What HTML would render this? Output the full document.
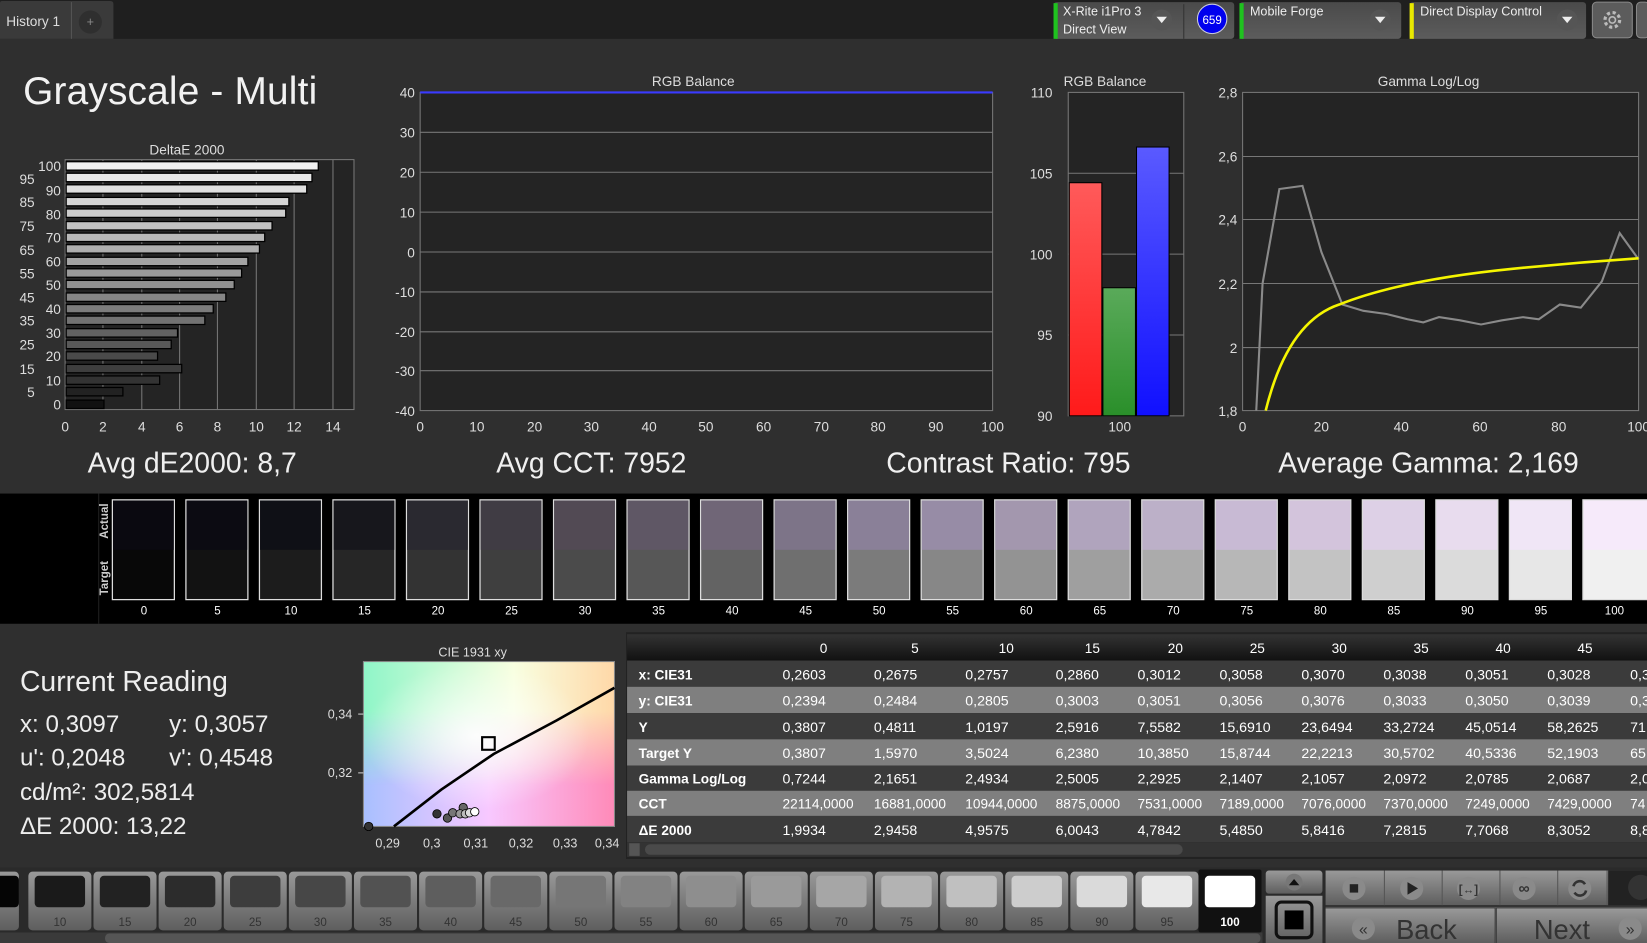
<!DOCTYPE html>
<html><head><meta charset="utf-8"><style>
html,body{margin:0;padding:0;background:#2f2f2f;overflow:hidden}
svg{display:block}
text{font-family:"Liberation Sans","DejaVu Sans",sans-serif}
</style></head><body>
<svg width="1647" height="943" viewBox="0 0 1568 898" preserveAspectRatio="none" xmlns="http://www.w3.org/2000/svg">
<defs>
<linearGradient id="btn" x1="0" y1="0" x2="0" y2="1"><stop offset="0" stop-color="#999"/><stop offset="1" stop-color="#5e5e5e"/></linearGradient>
<linearGradient id="tb" x1="0" y1="0" x2="0" y2="1"><stop offset="0" stop-color="#4a4a4a"/><stop offset="1" stop-color="#5c5c5c"/></linearGradient>
<linearGradient id="rr" x1="0" y1="0" x2="0" y2="1"><stop offset="0" stop-color="#ff5a5a"/><stop offset="1" stop-color="#ff1a1a"/></linearGradient>
<linearGradient id="gg" x1="0" y1="0" x2="0" y2="1"><stop offset="0" stop-color="#5aaa5a"/><stop offset="1" stop-color="#2a8f2a"/></linearGradient>
<linearGradient id="bb" x1="0" y1="0" x2="0" y2="1"><stop offset="0" stop-color="#5a5aff"/><stop offset="1" stop-color="#1010ff"/></linearGradient>
<linearGradient id="hd" x1="0" y1="0" x2="0" y2="1"><stop offset="0" stop-color="#333"/><stop offset="1" stop-color="#111"/></linearGradient>
<linearGradient id="barg" x1="0" y1="0" x2="1" y2="0"><stop offset="0" stop-color="#fff" stop-opacity="0.35"/><stop offset="0.6" stop-color="#fff" stop-opacity="0.1"/><stop offset="1" stop-color="#000" stop-opacity="0.3"/></linearGradient>
<linearGradient id="cieA" x1="0" y1="0" x2="1" y2="0"><stop offset="0" stop-color="#8ff5c8"/><stop offset="0.6" stop-color="#f8ffe0"/><stop offset="1" stop-color="#ffd8a8"/></linearGradient>
<linearGradient id="cieB" x1="0" y1="0" x2="1" y2="0"><stop offset="0" stop-color="#a8c0ff"/><stop offset="0.5" stop-color="#f8c8ff"/><stop offset="1" stop-color="#ff8ab8"/></linearGradient>
<linearGradient id="mg" x1="0" y1="0" x2="0" y2="1"><stop offset="0" stop-color="#fff"/><stop offset="0.3" stop-color="#fff"/><stop offset="0.75" stop-color="#000"/></linearGradient>
<mask id="cm" maskUnits="userSpaceOnUse" x="346" y="630" width="239" height="157"><rect x="346" y="630" width="239" height="157" fill="url(#mg)"/></mask>
<radialGradient id="cieW" cx="0.45" cy="0.45" r="0.45"><stop offset="0" stop-color="#fff" stop-opacity="0.9"/><stop offset="1" stop-color="#fff" stop-opacity="0"/></radialGradient>
</defs>
<rect width="1568" height="898" fill="#2f2f2f"/>
<!-- top bar -->
<rect width="1568" height="37" fill="#1f1f1f"/>
<path d="M0,37 V3 Q0,1 2,1 H105 Q108,1 108,4 V37 Z" fill="#3a3a3a"/>
<line x1="68" y1="2" x2="68" y2="37" stroke="#555"/>
<circle cx="86" cy="21" r="11" fill="#2f2f2f"/><text x="86" y="25" font-size="12" fill="#888" text-anchor="middle">+</text>
<text x="6" y="25" font-size="13" fill="#ddd">History 1</text>
<g>
<rect x="1003" y="2" width="172" height="35" rx="3" fill="url(#tb)"/><rect x="1003" y="3" width="4" height="34" fill="#1fc21f"/>
<text x="1012" y="15" font-size="12" fill="#eee">X-Rite i1Pro 3</text><text x="1012" y="32" font-size="12" fill="#eee">Direct View</text>
<circle cx="1106" cy="19" r="10" fill="#555"/><path d="M1101,16 L1111,16 L1106,22 Z" fill="#eee"/>
<line x1="1127" y1="4" x2="1127" y2="37" stroke="#333"/>
<circle cx="1154" cy="18" r="14" fill="#0000ee" stroke="#ccd" stroke-width="1"/><text x="1154" y="23" font-size="11" fill="#fff" text-anchor="middle">659</text>
<rect x="1180" y="2" width="154" height="35" rx="3" fill="url(#tb)"/><rect x="1180" y="3" width="4" height="34" fill="#1fc21f"/>
<text x="1190" y="15" font-size="12" fill="#eee">Mobile Forge</text>
<circle cx="1314" cy="19" r="10" fill="#555"/><path d="M1309,16 L1319,16 L1314,22 Z" fill="#eee"/>
<rect x="1342" y="2" width="168" height="35" rx="3" fill="url(#tb)"/><rect x="1342" y="3" width="4" height="34" fill="#e8e800"/>
<text x="1352" y="15" font-size="12" fill="#eee">Direct Display Control</text>
<circle cx="1492" cy="19" r="10" fill="#555"/><path d="M1487,16 L1497,16 L1492,22 Z" fill="#eee"/>
<rect x="1516" y="2" width="38" height="34" rx="4" fill="#5c5c5c" stroke="#888"/>
<circle cx="1535" cy="19" r="7" fill="none" stroke="#bbb" stroke-width="3" stroke-dasharray="3 2.5"/><circle cx="1535" cy="19" r="3" fill="#5c5c5c" stroke="#bbb" stroke-width="1.5"/>
<rect x="1558" y="2" width="12" height="34" rx="4" fill="#5c5c5c" stroke="#888"/>
</g>
<!-- title -->
<text x="22" y="99" font-size="37" fill="#f2f2f2" textLength="280">Grayscale - Multi</text>
<!-- DeltaE chart -->
<text x="178" y="147" font-size="13" fill="#ddd" text-anchor="middle">DeltaE 2000</text>
<rect x="62" y="152" width="275" height="238" fill="#242424" stroke="#777"/>
<g stroke="#777">
<line x1="98" y1="152" x2="98" y2="390"/><line x1="135" y1="152" x2="135" y2="390"/><line x1="171" y1="152" x2="171" y2="390"/><line x1="207" y1="152" x2="207" y2="390"/><line x1="244" y1="152" x2="244" y2="390"/><line x1="280" y1="152" x2="280" y2="390"/><line x1="317" y1="152" x2="317" y2="390"/>
</g>
<g stroke="#000" stroke-width="1.2">
<rect x="63" y="154" width="240" height="8" fill="#f0f0f0"/>
<rect x="63" y="165" width="234" height="8" fill="#e8e8e8"/>
<rect x="63" y="176" width="229" height="8" fill="#e0e0e0"/>
<rect x="63" y="188" width="212" height="8" fill="#d6d6d6"/>
<rect x="63" y="199" width="209" height="8" fill="#cccccc"/>
<rect x="63" y="211" width="196" height="8" fill="#c2c2c2"/>
<rect x="63" y="222" width="189" height="8" fill="#b8b8b8"/>
<rect x="63" y="233" width="184" height="8" fill="#aeaeae"/>
<rect x="63" y="245" width="173" height="8" fill="#a4a4a4"/>
<rect x="63" y="256" width="167" height="8" fill="#9a9a9a"/>
<rect x="63" y="267" width="160" height="8" fill="#909090"/>
<rect x="63" y="279" width="152" height="8" fill="#868686"/>
<rect x="63" y="290" width="140" height="8" fill="#7c7c7c"/>
<rect x="63" y="301" width="132" height="8" fill="#727272"/>
<rect x="63" y="313" width="106" height="8" fill="#626262"/>
<rect x="63" y="324" width="100" height="8" fill="#585858"/>
<rect x="63" y="335" width="87" height="8" fill="#4a4a4a"/>
<rect x="63" y="347" width="110" height="8" fill="#3e3e3e"/>
<rect x="63" y="358" width="89" height="8" fill="#333"/>
<rect x="63" y="369" width="54" height="8" fill="#222"/>
<rect x="63" y="381" width="36" height="8" fill="#111"/>
</g>
<g font-size="13" fill="#ddd" text-anchor="end">
<text x="58" y="163">100</text><text x="33" y="175">95</text><text x="58" y="186">90</text><text x="33" y="197">85</text><text x="58" y="209">80</text><text x="33" y="220">75</text><text x="58" y="231">70</text><text x="33" y="243">65</text><text x="58" y="254">60</text><text x="33" y="265">55</text><text x="58" y="276">50</text><text x="33" y="288">45</text><text x="58" y="299">40</text><text x="33" y="310">35</text><text x="58" y="322">30</text><text x="33" y="333">25</text><text x="58" y="344">20</text><text x="33" y="356">15</text><text x="58" y="367">10</text><text x="33" y="378">5</text><text x="58" y="390">0</text>
</g>
<g font-size="13" fill="#ddd" text-anchor="middle">
<text x="62" y="411">0</text><text x="98" y="411">2</text><text x="135" y="411">4</text><text x="171" y="411">6</text><text x="207" y="411">8</text><text x="244" y="411">10</text><text x="280" y="411">12</text><text x="317" y="411">14</text>
</g>
<text x="183" y="450" font-size="27" fill="#f0f0f0" text-anchor="middle">Avg dE2000: 8,7</text>
<!-- RGB balance line -->
<text x="660" y="82" font-size="13" fill="#ddd" text-anchor="middle">RGB Balance</text>
<rect x="400" y="88" width="545" height="303" fill="#242424" stroke="#777"/>
<g stroke="#777"><line x1="400" y1="126" x2="945" y2="126"/><line x1="400" y1="164" x2="945" y2="164"/><line x1="400" y1="202" x2="945" y2="202"/><line x1="400" y1="240" x2="945" y2="240"/><line x1="400" y1="278" x2="945" y2="278"/><line x1="400" y1="316" x2="945" y2="316"/><line x1="400" y1="353" x2="945" y2="353"/></g>
<line x1="400" y1="88" x2="945" y2="88" stroke="#3a3aff" stroke-width="2"/>
<g font-size="13" fill="#ddd" text-anchor="end">
<text x="395" y="93">40</text><text x="395" y="131">30</text><text x="395" y="169">20</text><text x="395" y="207">10</text><text x="395" y="245">0</text><text x="395" y="283">-10</text><text x="395" y="321">-20</text><text x="395" y="358">-30</text><text x="395" y="396">-40</text>
</g>
<g font-size="13" fill="#ddd" text-anchor="middle">
<text x="400" y="411">0</text><text x="454" y="411">10</text><text x="509" y="411">20</text><text x="563" y="411">30</text><text x="618" y="411">40</text><text x="672" y="411">50</text><text x="727" y="411">60</text><text x="782" y="411">70</text><text x="836" y="411">80</text><text x="891" y="411">90</text><text x="945" y="411">100</text>
</g>
<text x="563" y="450" font-size="27" fill="#f0f0f0" text-anchor="middle">Avg CCT: 7952</text>
<!-- RGB bars -->
<text x="1052" y="82" font-size="13" fill="#ddd" text-anchor="middle">RGB Balance</text>
<rect x="1017" y="88" width="110" height="308" fill="#242424" stroke="#777"/>
<g stroke="#777"><line x1="1017" y1="165" x2="1127" y2="165"/><line x1="1017" y1="242" x2="1127" y2="242"/><line x1="1017" y1="319" x2="1127" y2="319"/></g>
<rect x="1018" y="174" width="31" height="222" fill="url(#rr)" stroke="#000"/>
<rect x="1050" y="274" width="31" height="122" fill="url(#gg)" stroke="#000"/>
<rect x="1082" y="140" width="31" height="256" fill="url(#bb)" stroke="#000"/>
<g font-size="13" fill="#ddd" text-anchor="end"><text x="1002" y="93">110</text><text x="1002" y="170">105</text><text x="1002" y="247">100</text><text x="1002" y="324">95</text><text x="1002" y="401">90</text></g>
<text x="1066" y="411" font-size="13" fill="#ddd" text-anchor="middle">100</text>
<text x="960" y="450" font-size="27" fill="#f0f0f0" text-anchor="middle">Contrast Ratio: 795</text>
<!-- Gamma -->
<text x="1360" y="82" font-size="13" fill="#ddd" text-anchor="middle">Gamma Log/Log</text>
<rect x="1183" y="88" width="377" height="303" fill="#242424" stroke="#777"/>
<g stroke="#777"><line x1="1183" y1="149" x2="1560" y2="149"/><line x1="1183" y1="209" x2="1560" y2="209"/><line x1="1183" y1="270" x2="1560" y2="270"/><line x1="1183" y1="331" x2="1560" y2="331"/></g>
<polyline fill="none" stroke="#8a8a8a" stroke-width="2" points="1196,391 1202,270 1218,180 1240,177 1258,240 1278,290 1298,296 1320,299 1340,304 1355,307 1370,302 1390,305 1410,309 1430,305 1450,302 1465,304 1485,290 1505,293 1525,268 1542,222 1560,247"/>
<path d="M1205,391 C1220,330 1245,300 1275,290 C1320,272 1380,262 1440,256 C1490,251 1530,248 1560,246" fill="none" stroke="#f5f500" stroke-width="2.5"/>
<g font-size="13" fill="#ddd" text-anchor="end"><text x="1178" y="93">2,8</text><text x="1178" y="154">2,6</text><text x="1178" y="214">2,4</text><text x="1178" y="275">2,2</text><text x="1178" y="336">2</text><text x="1178" y="396">1,8</text></g>
<g font-size="13" fill="#ddd" text-anchor="middle"><text x="1183" y="411">0</text><text x="1258" y="411">20</text><text x="1334" y="411">40</text><text x="1409" y="411">60</text><text x="1484" y="411">80</text><text x="1560" y="411">100</text></g>
<text x="1360" y="450" font-size="27" fill="#f0f0f0" text-anchor="middle">Average Gamma: 2,169</text>
<!-- swatches -->
<rect x="0" y="470" width="1568" height="124" fill="#000"/>
<line x1="94" y1="470" x2="94" y2="594" stroke="#222"/>
<text transform="translate(103,513) rotate(-90)" font-size="11" font-weight="bold" fill="#ccc">Actual</text>
<text transform="translate(103,567) rotate(-90)" font-size="11" font-weight="bold" fill="#ccc">Target</text>
<g stroke="#ddd" stroke-width="1.2">
<rect x="107" y="476" width="59" height="95" fill="#080808"/><rect x="107.6" y="476.6" width="57.8" height="47" fill="#0a0910" stroke="none"/>
<rect x="177" y="476" width="59" height="95" fill="#121212"/><rect x="177.6" y="476.6" width="57.8" height="47" fill="#0c0b12" stroke="none"/>
<rect x="247" y="476" width="59" height="95" fill="#1c1c1c"/><rect x="247.6" y="476.6" width="57.8" height="47" fill="#0f1016" stroke="none"/>
<rect x="317" y="476" width="59" height="95" fill="#262626"/><rect x="317.6" y="476.6" width="57.8" height="47" fill="#17171c" stroke="none"/>
<rect x="387" y="476" width="59" height="95" fill="#333"/><rect x="387.6" y="476.6" width="57.8" height="47" fill="#2a2930" stroke="none"/>
<rect x="457" y="476" width="59" height="95" fill="#3f3f3f"/><rect x="457.6" y="476.6" width="57.8" height="47" fill="#403c44" stroke="none"/>
<rect x="527" y="476" width="59" height="95" fill="#4b4b4b"/><rect x="527.6" y="476.6" width="57.8" height="47" fill="#524a54" stroke="none"/>
<rect x="597" y="476" width="59" height="95" fill="#575757"/><rect x="597.6" y="476.6" width="57.8" height="47" fill="#5f5765" stroke="none"/>
<rect x="667" y="476" width="59" height="95" fill="#636363"/><rect x="667.6" y="476.6" width="57.8" height="47" fill="#706677" stroke="none"/>
<rect x="737" y="476" width="59" height="95" fill="#6f6f6f"/><rect x="737.6" y="476.6" width="57.8" height="47" fill="#7d7488" stroke="none"/>
<rect x="807" y="476" width="59" height="95" fill="#7b7b7b"/><rect x="807.6" y="476.6" width="57.8" height="47" fill="#8a8098" stroke="none"/>
<rect x="877" y="476" width="59" height="95" fill="#878787"/><rect x="877.6" y="476.6" width="57.8" height="47" fill="#978ca6" stroke="none"/>
<rect x="947" y="476" width="59" height="95" fill="#939393"/><rect x="947.6" y="476.6" width="57.8" height="47" fill="#a397ae" stroke="none"/>
<rect x="1017" y="476" width="59" height="95" fill="#9f9f9f"/><rect x="1017.6" y="476.6" width="57.8" height="47" fill="#b0a4bd" stroke="none"/>
<rect x="1087" y="476" width="59" height="95" fill="#ababab"/><rect x="1087.6" y="476.6" width="57.8" height="47" fill="#bcb0c8" stroke="none"/>
<rect x="1157" y="476" width="59" height="95" fill="#b7b7b7"/><rect x="1157.6" y="476.6" width="57.8" height="47" fill="#c8bad4" stroke="none"/>
<rect x="1227" y="476" width="59" height="95" fill="#c3c3c3"/><rect x="1227.6" y="476.6" width="57.8" height="47" fill="#d3c4dc" stroke="none"/>
<rect x="1297" y="476" width="59" height="95" fill="#cfcfcf"/><rect x="1297.6" y="476.6" width="57.8" height="47" fill="#ddd0e6" stroke="none"/>
<rect x="1367" y="476" width="59" height="95" fill="#dbdbdb"/><rect x="1367.6" y="476.6" width="57.8" height="47" fill="#e8dcee" stroke="none"/>
<rect x="1437" y="476" width="59" height="95" fill="#e7e7e7"/><rect x="1437.6" y="476.6" width="57.8" height="47" fill="#f0e6f6" stroke="none"/>
<rect x="1507" y="476" width="63" height="95" fill="#f0f0f0"/><rect x="1507.6" y="476.6" width="62" height="47" fill="#f6eafa" stroke="none"/>
</g>
<g font-size="11" fill="#fff" text-anchor="middle">
<text x="137" y="585">0</text><text x="207" y="585">5</text><text x="277" y="585">10</text><text x="347" y="585">15</text><text x="417" y="585">20</text><text x="487" y="585">25</text><text x="557" y="585">30</text><text x="627" y="585">35</text><text x="697" y="585">40</text><text x="767" y="585">45</text><text x="837" y="585">50</text><text x="907" y="585">55</text><text x="977" y="585">60</text><text x="1047" y="585">65</text><text x="1117" y="585">70</text><text x="1187" y="585">75</text><text x="1257" y="585">80</text><text x="1327" y="585">85</text><text x="1397" y="585">90</text><text x="1467" y="585">95</text><text x="1537" y="585">100</text>
</g>
<!-- current reading -->
<text x="19" y="658" font-size="27" fill="#eee">Current Reading</text>
<g font-size="23" fill="#eee">
<text x="19" y="697">x: 0,3097</text><text x="161" y="697">y: 0,3057</text>
<text x="19" y="729">u': 0,2048</text><text x="161" y="729">v': 0,4548</text>
<text x="19" y="762">cd/m²: 302,5814</text>
<text x="19" y="794">ΔE 2000: 13,22</text>
</g>
<!-- CIE -->
<text x="450" y="625" font-size="12" fill="#ddd" text-anchor="middle">CIE 1931 xy</text>
<rect x="346" y="630" width="239" height="157" fill="url(#cieB)"/>
<rect x="346" y="630" width="239" height="157" fill="url(#cieA)" mask="url(#cm)"/>
<rect x="346" y="630" width="239" height="157" fill="url(#cieW)"/>
<rect x="346" y="630" width="239" height="157" fill="none" stroke="#888"/>
<path d="M375,787 L420,752 L470,718 L530,686 L585,655" fill="none" stroke="#000" stroke-width="2.5"/>
<rect x="459" y="702" width="12" height="12" fill="none" stroke="#000" stroke-width="2"/>
<g stroke="#000" stroke-width="0.8">
<circle cx="351" cy="787" r="4" fill="#333"/>
<circle cx="416" cy="775" r="4" fill="#333"/><circle cx="426" cy="779" r="4" fill="#555"/><circle cx="431" cy="774" r="4" fill="#777"/><circle cx="441" cy="769" r="4" fill="#666"/><circle cx="438" cy="775" r="4" fill="#999"/><circle cx="443" cy="775" r="4" fill="#bbb"/><circle cx="447" cy="774" r="4" fill="#ddd"/><circle cx="452" cy="773" r="4" fill="#fff"/>
</g>
<g font-size="12" fill="#ddd"><text x="312" y="684">0,34</text><text x="312" y="740">0,32</text></g>
<g stroke="#ccc"><line x1="341" y1="680" x2="346" y2="680"/><line x1="341" y1="736" x2="346" y2="736"/></g>
<g font-size="12" fill="#ddd" text-anchor="middle"><text x="369" y="807">0,29</text><text x="411" y="807">0,3</text><text x="453" y="807">0,31</text><text x="496" y="807">0,32</text><text x="538" y="807">0,33</text><text x="578" y="807">0,34</text></g>
<!-- table -->
<rect x="596" y="602" width="972" height="216" fill="#222"/>
<rect x="597" y="604" width="971" height="25" fill="url(#hd)"/>
<rect x="597" y="629" width="971" height="25" fill="#3b3b3b"/>
<rect x="597" y="654" width="971" height="25" fill="#7f7f7f"/>
<rect x="597" y="679" width="971" height="25" fill="#3b3b3b"/>
<rect x="597" y="704" width="971" height="25" fill="#7f7f7f"/>
<rect x="597" y="729" width="971" height="24" fill="#3b3b3b"/>
<rect x="597" y="753" width="971" height="24" fill="#7f7f7f"/>
<rect x="597" y="777" width="971" height="25" fill="#3b3b3b"/>
<rect x="597" y="802" width="971" height="14" fill="#333"/>
<rect x="614" y="804" width="512" height="10" rx="5" fill="#4a4a4a"/>
<rect x="599" y="803" width="10" height="12" fill="#555"/>
<g font-size="13" fill="#fff" text-anchor="middle">
<text x="784" y="622">0</text><text x="871" y="622">5</text><text x="958" y="622">10</text><text x="1040" y="622">15</text><text x="1119" y="622">20</text><text x="1197" y="622">25</text><text x="1275" y="622">30</text><text x="1353" y="622">35</text><text x="1431" y="622">40</text><text x="1509" y="622">45</text>
</g>
<g font-size="13" font-weight="bold" fill="#fff">
<text x="608" y="647">x: CIE31</text><text x="608" y="672">y: CIE31</text><text x="608" y="697">Y</text><text x="608" y="722">Target Y</text><text x="608" y="746">Gamma Log/Log</text><text x="608" y="770">CCT</text><text x="608" y="795">ΔE 2000</text>
</g>
<g font-size="13.5" fill="#fff">
<text y="647"><tspan x="745">0,2603</tspan><tspan x="832">0,2675</tspan><tspan x="919">0,2757</tspan><tspan x="1005">0,2860</tspan><tspan x="1083">0,3012</tspan><tspan x="1161">0,3058</tspan><tspan x="1239">0,3070</tspan><tspan x="1317">0,3038</tspan><tspan x="1395">0,3051</tspan><tspan x="1473">0,3028</tspan><tspan x="1552">0,3</tspan></text>
<text y="672"><tspan x="745">0,2394</tspan><tspan x="832">0,2484</tspan><tspan x="919">0,2805</tspan><tspan x="1005">0,3003</tspan><tspan x="1083">0,3051</tspan><tspan x="1161">0,3056</tspan><tspan x="1239">0,3076</tspan><tspan x="1317">0,3033</tspan><tspan x="1395">0,3050</tspan><tspan x="1473">0,3039</tspan><tspan x="1552">0,3</tspan></text>
<text y="697"><tspan x="745">0,3807</tspan><tspan x="832">0,4811</tspan><tspan x="919">1,0197</tspan><tspan x="1005">2,5916</tspan><tspan x="1083">7,5582</tspan><tspan x="1161">15,6910</tspan><tspan x="1239">23,6494</tspan><tspan x="1317">33,2724</tspan><tspan x="1395">45,0514</tspan><tspan x="1473">58,2625</tspan><tspan x="1552">71</tspan></text>
<text y="722"><tspan x="745">0,3807</tspan><tspan x="832">1,5970</tspan><tspan x="919">3,5024</tspan><tspan x="1005">6,2380</tspan><tspan x="1083">10,3850</tspan><tspan x="1161">15,8744</tspan><tspan x="1239">22,2213</tspan><tspan x="1317">30,5702</tspan><tspan x="1395">40,5336</tspan><tspan x="1473">52,1903</tspan><tspan x="1552">65</tspan></text>
<text y="746"><tspan x="745">0,7244</tspan><tspan x="832">2,1651</tspan><tspan x="919">2,4934</tspan><tspan x="1005">2,5005</tspan><tspan x="1083">2,2925</tspan><tspan x="1161">2,1407</tspan><tspan x="1239">2,1057</tspan><tspan x="1317">2,0972</tspan><tspan x="1395">2,0785</tspan><tspan x="1473">2,0687</tspan><tspan x="1552">2,0</tspan></text>
<text y="770" font-size="13"><tspan x="745">22114,0000</tspan><tspan x="832">16881,0000</tspan><tspan x="919">10944,0000</tspan><tspan x="1005">8875,0000</tspan><tspan x="1083">7531,0000</tspan><tspan x="1161">7189,0000</tspan><tspan x="1239">7076,0000</tspan><tspan x="1317">7370,0000</tspan><tspan x="1395">7249,0000</tspan><tspan x="1473">7429,0000</tspan><tspan x="1552">74</tspan></text>
<text y="795"><tspan x="745">1,9934</tspan><tspan x="832">2,9458</tspan><tspan x="919">4,9575</tspan><tspan x="1005">6,0043</tspan><tspan x="1083">4,7842</tspan><tspan x="1161">5,4850</tspan><tspan x="1239">5,8416</tspan><tspan x="1317">7,2815</tspan><tspan x="1395">7,7068</tspan><tspan x="1473">8,3052</tspan><tspan x="1552">8,8</tspan></text>
</g>
<!-- bottom buttons -->
<rect x="0" y="826" width="1568" height="72" fill="#2a2a2a"/>
<rect x="-10" y="830" width="28" height="56" rx="4" fill="url(#btn)"/><rect x="-6" y="834" width="24" height="30" rx="4" fill="#050505"/>
<g font-size="11" fill="#333" text-anchor="middle">
<rect x="27" y="830" width="60" height="56" rx="4" fill="url(#btn)"/><rect x="33" y="834" width="48" height="30" rx="4" fill="#1a1a1a"/><text x="57" y="882">10</text>
<rect x="89" y="830" width="60" height="56" rx="4" fill="url(#btn)"/><rect x="95" y="834" width="48" height="30" rx="4" fill="#222"/><text x="119" y="882">15</text>
<rect x="151" y="830" width="60" height="56" rx="4" fill="url(#btn)"/><rect x="157" y="834" width="48" height="30" rx="4" fill="#2c2c2c"/><text x="181" y="882">20</text>
<rect x="213" y="830" width="60" height="56" rx="4" fill="url(#btn)"/><rect x="219" y="834" width="48" height="30" rx="4" fill="#3d3d3d"/><text x="243" y="882">25</text>
<rect x="275" y="830" width="60" height="56" rx="4" fill="url(#btn)"/><rect x="281" y="834" width="48" height="30" rx="4" fill="#474747"/><text x="305" y="882">30</text>
<rect x="337" y="830" width="60" height="56" rx="4" fill="url(#btn)"/><rect x="343" y="834" width="48" height="30" rx="4" fill="#525252"/><text x="367" y="882">35</text>
<rect x="399" y="830" width="60" height="56" rx="4" fill="url(#btn)"/><rect x="405" y="834" width="48" height="30" rx="4" fill="#5e5e5e"/><text x="429" y="882">40</text>
<rect x="461" y="830" width="60" height="56" rx="4" fill="url(#btn)"/><rect x="467" y="834" width="48" height="30" rx="4" fill="#696969"/><text x="491" y="882">45</text>
<rect x="523" y="830" width="60" height="56" rx="4" fill="url(#btn)"/><rect x="529" y="834" width="48" height="30" rx="4" fill="#767676"/><text x="553" y="882">50</text>
<rect x="585" y="830" width="60" height="56" rx="4" fill="url(#btn)"/><rect x="591" y="834" width="48" height="30" rx="4" fill="#828282"/><text x="615" y="882">55</text>
<rect x="647" y="830" width="60" height="56" rx="4" fill="url(#btn)"/><rect x="653" y="834" width="48" height="30" rx="4" fill="#8e8e8e"/><text x="677" y="882">60</text>
<rect x="709" y="830" width="60" height="56" rx="4" fill="url(#btn)"/><rect x="715" y="834" width="48" height="30" rx="4" fill="#9a9a9a"/><text x="739" y="882">65</text>
<rect x="771" y="830" width="60" height="56" rx="4" fill="url(#btn)"/><rect x="777" y="834" width="48" height="30" rx="4" fill="#a6a6a6"/><text x="801" y="882">70</text>
<rect x="833" y="830" width="60" height="56" rx="4" fill="url(#btn)"/><rect x="839" y="834" width="48" height="30" rx="4" fill="#b3b3b3"/><text x="863" y="882">75</text>
<rect x="895" y="830" width="60" height="56" rx="4" fill="url(#btn)"/><rect x="901" y="834" width="48" height="30" rx="4" fill="#c0c0c0"/><text x="925" y="882">80</text>
<rect x="957" y="830" width="60" height="56" rx="4" fill="url(#btn)"/><rect x="963" y="834" width="48" height="30" rx="4" fill="#cdcdcd"/><text x="987" y="882">85</text>
<rect x="1019" y="830" width="60" height="56" rx="4" fill="url(#btn)"/><rect x="1025" y="834" width="48" height="30" rx="4" fill="#dadada"/><text x="1049" y="882">90</text>
<rect x="1081" y="830" width="60" height="56" rx="4" fill="url(#btn)"/><rect x="1087" y="834" width="48" height="30" rx="4" fill="#e8e8e8"/><text x="1111" y="882">95</text>
<rect x="1141" y="828" width="60" height="60" rx="2" fill="#111"/><rect x="1147" y="834" width="48" height="30" rx="4" fill="#fff"/><text x="1171" y="882" fill="#fff" font-weight="bold">100</text>
</g>
<rect x="0" y="888" width="1202" height="10" fill="#3a3a3a"/><rect x="100" y="889" width="1100" height="9" rx="4" fill="#555"/>
<!-- right controls -->
<rect x="1204" y="828" width="56" height="70" fill="#2a2a2a"/>
<rect x="1205" y="829" width="54" height="22" rx="3" fill="url(#btn)"/><circle cx="1232" cy="840" r="8" fill="#777"/><path d="M1227,843 L1237,843 L1232,837 Z" fill="#111"/>
<rect x="1205" y="853" width="54" height="45" fill="url(#btn)"/><rect x="1215" y="859" width="34" height="34" rx="5" fill="none" stroke="#111" stroke-width="3"/><rect x="1223" y="867" width="18" height="18" fill="#000"/>
<g>
<rect x="1262" y="829" width="300" height="33" fill="url(#btn)"/>
<g stroke="#555"><line x1="1318" y1="829" x2="1318" y2="862"/><line x1="1373" y1="829" x2="1373" y2="862"/><line x1="1428" y1="829" x2="1428" y2="862"/><line x1="1483" y1="829" x2="1483" y2="862"/><line x1="1530" y1="829" x2="1530" y2="862"/><line x1="1262" y1="864" x2="1568" y2="864"/><line x1="1424" y1="864" x2="1424" y2="898"/></g>
<rect x="1531" y="829" width="37" height="33" fill="#222"/><circle cx="1562" cy="845" r="12" fill="#333"/>
<circle cx="1289" cy="846" r="11" fill="#8a8a8a"/><rect x="1285" y="842" width="8" height="8" fill="#222"/>
<circle cx="1344" cy="846" r="11" fill="#8a8a8a"/><path d="M1340,840 L1350,846 L1340,852 Z" fill="#222"/>
<circle cx="1398" cy="846" r="11" fill="#8a8a8a"/><text x="1398" y="851" font-size="11" font-weight="bold" fill="#333" text-anchor="middle">[↔]</text>
<circle cx="1451" cy="846" r="11" fill="#8a8a8a"/><text x="1451" y="851" font-size="15" font-weight="bold" fill="#333" text-anchor="middle">∞</text>
<circle cx="1504" cy="846" r="11" fill="#8a8a8a"/><path d="M1498,844 A6,6 0 0 1 1509,842 M1510,848 A6,6 0 0 1 1499,850" fill="none" stroke="#333" stroke-width="2.5"/>
<rect x="1262" y="865" width="161" height="33" fill="url(#btn)"/>
<rect x="1425" y="865" width="143" height="33" fill="url(#btn)"/>
<circle cx="1298" cy="884" r="11" fill="#8a8a8a"/><text x="1298" y="890" font-size="15" fill="#333" text-anchor="middle">«</text>
<text x="1358" y="894" font-size="26" fill="#333" text-anchor="middle">Back</text>
<text x="1487" y="894" font-size="26" fill="#333" text-anchor="middle">Next</text>
<circle cx="1552" cy="884" r="11" fill="#8a8a8a"/><text x="1552" y="890" font-size="15" fill="#333" text-anchor="middle">»</text>
</g>
</svg>
</body></html>
